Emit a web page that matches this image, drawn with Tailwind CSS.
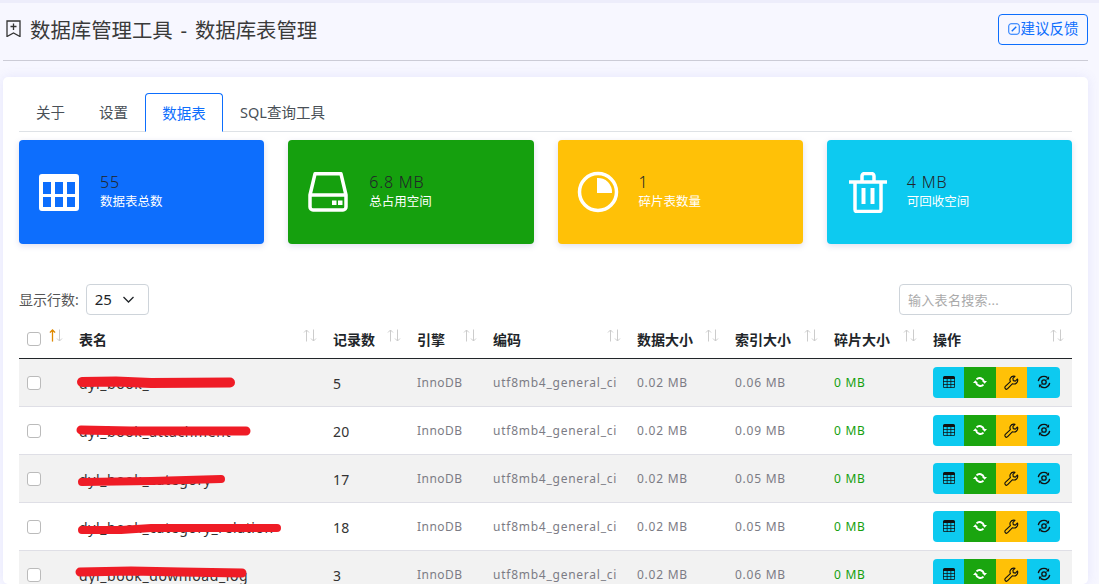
<!DOCTYPE html>
<html lang="zh-CN">
<head>
  <meta charset="UTF-8" />
  <meta name="viewport" content="width=device-width, initial-scale=1" />
  <title>数据库表管理</title>
  <script src="https://cdn.jsdelivr.net/npm/@tailwindcss/browser@4"></script>
</head>
<body class="bg-[#f7f7ff] h-[584px] overflow-hidden font-['Noto_Sans','Noto_Sans_CJK_SC',sans-serif] text-[#212529]">

  <!-- icons used by the table rows -->
  <svg class="hidden">
    <symbol id="i-table" viewBox="0 0 16 16"><path d="M0 2a2 2 0 0 1 2-2h12a2 2 0 0 1 2 2v12a2 2 0 0 1-2 2H2a2 2 0 0 1-2-2V2zm15 2h-4v3h4V4zm0 4h-4v3h4V8zm0 4h-4v3h3a1 1 0 0 0 1-1v-2zm-5 3v-3H6v3h4zm-5 0v-3H1v2a1 1 0 0 0 1 1h3zm-4-4h4V8H1v3zm0-4h4V4H1v3zm5-3v3h4V4H6zm4 4H6v3h4V8z"/></symbol>
    <symbol id="i-repeat" viewBox="0 0 16 16"><path d="M10.500 6.800h5.500l-2.750 3.200zM0 9.200h5.500L2.750 6z"/><path fill="none" stroke="currentColor" stroke-width="2.200" d="M4 5a5 5 0 0 1 8.500 2.500M12 11a5 5 0 0 1-8.500-2.500"/></symbol>
    <symbol id="i-wrench" viewBox="0 0 16 16"><path fill="none" stroke="currentColor" stroke-width="1.200" stroke-linejoin="round" d="M10.200 1.200a4 4 0 0 1 1.500.2L9.500 3.700l.4 2.300 2.200.5 2.300-2.200a4 4 0 0 1-5.300 5L3.900 14.600a1.700 1.700 0 0 1-2.500-2.400l5.400-5.200a4 4 0 0 1 3.400-5.800z"/></symbol>
    <symbol id="i-sync" viewBox="0 0 16 16"><g fill="none" stroke="currentColor" stroke-width="1.500"><circle cx="8" cy="8" r="2.500"/><path d="M1.500 7A6.500 6.500 0 0 1 12 3M14.500 9A6.500 6.500 0 0 1 4 13"/></g><path d="M13.800 1.500v3.700h-3.700zM2.200 14.500v-3.700h3.700z"/></symbol>
    <symbol id="i-sort" viewBox="0 0 14 13"><path fill="none" stroke="currentColor" stroke-width="1" d="M3.500 12.500V1M1 3.500 3.500 1 6 3.500M10.500.5V12M8 9.500l2.500 2.500L13 9.500"/></symbol>
  </svg>

  <div class="h-[3px] bg-[#ededfb]"></div>

  <div class="ml-[3px] w-[1085px]">
    <!-- page header -->
    <header class="h-[58px] border-b border-[#ccccd6] flex items-center justify-between">
      <div class="flex items-center gap-[9px] pl-[3px] pb-[3px]">
        <svg class="w-[15px] h-[17px] text-[#333] mb-[4px]" viewBox="0 0 15 17" fill="none" stroke="currentColor" stroke-width="1.300"><path d="M1 16.500V1h13v15.500l-6.500-3.500zM4.500 6.500h6M7.500 3.500v6.500"/></svg>
        <h1 class="text-[20.4px] leading-[30px] text-[#3a3a3a] [word-spacing:2.5px]">数据库管理工具 - 数据库表管理</h1>
      </div>
      <a class="h-[31px] w-[90px] border border-[#0d6efd] rounded-[4px] text-[#0d6efd] text-[14.5px] flex items-center justify-center gap-[1px] mb-[5px]">
        <svg class="w-[12px] h-[12px]" viewBox="0 0 16 16" fill="none" stroke="currentColor" stroke-width="1.300"><rect x="1" y="1" width="14" height="14" rx="3"/><path d="M5 11l6-6" stroke-width="2"/></svg>
        建议反馈
      </a>
    </header>

    <!-- main card -->
    <main class="mt-[16px] h-[507px] bg-white rounded-[5px] shadow-[0_0_12px_rgba(110,110,230,0.12)] px-[16px] pt-[16px] overflow-hidden">
      <nav class="flex h-[39px] border-b border-[#dee2e6] text-[14.5px] text-[#495057]">
        <a class="w-[63px] pt-[2px] flex items-center justify-center">关于</a>
        <a class="w-[63px] pt-[2px] flex items-center justify-center">设置</a>
        <a class="w-[78px] h-[39px] pt-[2px] flex items-center justify-center text-[#0d6efd] bg-white border border-[#0d6efd] border-b-white rounded-t-[4px]">数据表</a>
        <a class="px-[17px] pt-[2px] flex items-center">SQL查询工具</a>
      </nav>

      <!-- stats -->
      <section class="grid grid-cols-4 gap-[24px] mt-[8px] h-[104px]">
        <div class="bg-[#0d6efd] rounded-[4px] shadow-[0_2px_6px_rgba(80,80,160,0.18)] flex items-center pl-[20px]">
          <svg class="w-[40px] h-[37px] text-white shrink-0 mt-[1px]" viewBox="0 0 40 37" fill="currentColor"><path fill-rule="evenodd" d="M3 0h34a3 3 0 0 1 3 3v31a3 3 0 0 1-3 3H3a3 3 0 0 1-3-3V3a3 3 0 0 1 3-3zM4 8v12h8V8zm12 0v12h8V8zm12 0v12h8V8zM4 23v10h8V23zm12 0v10h8V23zm12 0v10h8V23z"/></svg>
          <div class="ml-[21px] pb-[4px]">
            <div class="text-[16px] leading-[24px] tracking-[0.8px] font-light">55</div>
            <div class="text-[12.5px] leading-[16px] text-white">数据表总数</div>
          </div>
        </div>
        <div class="bg-[#15a00e] rounded-[4px] shadow-[0_2px_6px_rgba(80,80,160,0.18)] flex items-center pl-[20px]">
          <svg class="w-[40px] h-[40px] text-white shrink-0" viewBox="0 0 40 40" fill="none" stroke="currentColor" stroke-width="3.500" stroke-linejoin="round"><path d="M7 1.800h26l5 21.200v12a3 3 0 0 1-3 3H5a3 3 0 0 1-3-3V23zM2 23h36"/><path fill="currentColor" stroke="none" d="M24 28.500h4.500v4.500H24zM30 28.500h4.500v4.500H30z"/></svg>
          <div class="ml-[21px] pb-[4px]">
            <div class="text-[16px] leading-[24px] tracking-[0.8px] font-light">6.8 MB</div>
            <div class="text-[12.5px] leading-[16px] text-white">总占用空间</div>
          </div>
        </div>
        <div class="bg-[#ffc107] rounded-[4px] shadow-[0_2px_6px_rgba(80,80,160,0.18)] flex items-center pl-[19px]">
          <svg class="w-[42px] h-[42px] text-white shrink-0" viewBox="0 0 42 42" fill="none"><circle cx="21" cy="21" r="18.500" stroke="currentColor" stroke-width="3.500"/><path fill="currentColor" d="M20 7a14 14 0 0 1 15 15H20z"/></svg>
          <div class="ml-[20px] pb-[4px]">
            <div class="text-[16px] leading-[24px] tracking-[0.8px] font-light">1</div>
            <div class="text-[12.5px] leading-[16px] text-white">碎片表数量</div>
          </div>
        </div>
        <div class="bg-[#0dcaf0] rounded-[4px] shadow-[0_2px_6px_rgba(80,80,160,0.18)] flex items-center pl-[22px]">
          <svg class="w-[38px] h-[41px] text-white shrink-0" viewBox="0 0 38 41" fill="none" stroke="currentColor" stroke-width="3.500"><path d="M0 10h38M13 10V4a2.500 2.500 0 0 1 2.500-2.500h7A2.500 2.500 0 0 1 25 4v6M6 10v27.500a2 2 0 0 0 2 2h22a2 2 0 0 0 2-2V10"/><path d="M14.500 16v16M23.500 16v16" stroke-width="4"/></svg>
          <div class="ml-[20px] pb-[4px]">
            <div class="text-[16px] leading-[24px] tracking-[0.8px] font-light">4 MB</div>
            <div class="text-[12.5px] leading-[16px] text-white">可回收空间</div>
          </div>
        </div>
      </section>

      <!-- table tools -->
      <div class="flex items-center justify-between mt-[40px] h-[31px]">
        <div class="flex items-center gap-[7px] text-[14px] text-[#555] pb-[1px]">
          显示行数:
          <div class="w-[63px] h-[31px] border border-[#ced4da] rounded-[4px] flex items-center justify-between pl-[8px] pr-[14px] text-[15px] text-[#212529]">
            25
            <svg class="w-[11px] h-[7px]" viewBox="0 0 11 7" fill="none" stroke="currentColor" stroke-width="1.300"><path d="M.5 1l5 5 5-5"/></svg>
          </div>
        </div>
        <input class="w-[173px] h-[31px] border border-[#ced4da] rounded-[4px] px-[8px] text-[13px] tracking-[0.3px] outline-none placeholder:text-[#aaa]" placeholder="输入表名搜索..." />
      </div>

      <!-- tables list -->
      <table class="table-fixed w-[1053px] mt-[6px] border-collapse">
        <colgroup>
          <col class="w-[52px]" /><col class="w-[254px]" /><col class="w-[84px]" /><col class="w-[76px]" />
          <col class="w-[144px]" /><col class="w-[98px]" /><col class="w-[99px]" /><col class="w-[99px]" /><col class="w-[147px]" />
        </colgroup>
        <thead class="text-[14px] text-left">
          <tr class="h-[37px] border-b border-[#212529]">
            <th class="relative pl-[8px]">
              <span class="block w-[14px] h-[14px] border border-[#bbb] rounded-[3px] bg-white"></span>
              <svg class="absolute right-[8px] top-[8px] w-[14px] h-[13px] text-[#ccc]" viewBox="0 0 14 13"><use href="#i-sort" /></svg>
              <svg class="absolute right-[15px] top-[8px] w-[7px] h-[13px] text-[#e08a00]" viewBox="0 0 7 13"><path fill="none" stroke="currentColor" stroke-width="1.300" d="M3.500 12.500V1M1 3.500 3.500 1 6 3.500"/></svg>
            </th>
            <th class="relative px-[8px] font-bold">表名<svg class="absolute right-[8px] top-[8px] w-[14px] h-[13px] text-[#ccc]"><use href="#i-sort" /></svg></th>
            <th class="relative px-[8px] font-bold">记录数<svg class="absolute right-[8px] top-[8px] w-[14px] h-[13px] text-[#ccc]"><use href="#i-sort" /></svg></th>
            <th class="relative px-[8px] font-bold">引擎<svg class="absolute right-[8px] top-[8px] w-[14px] h-[13px] text-[#ccc]"><use href="#i-sort" /></svg></th>
            <th class="relative px-[8px] font-bold">编码<svg class="absolute right-[8px] top-[8px] w-[14px] h-[13px] text-[#ccc]"><use href="#i-sort" /></svg></th>
            <th class="relative px-[8px] font-bold">数据大小<svg class="absolute right-[8px] top-[8px] w-[14px] h-[13px] text-[#ccc]"><use href="#i-sort" /></svg></th>
            <th class="relative px-[8px] font-bold">索引大小<svg class="absolute right-[8px] top-[8px] w-[14px] h-[13px] text-[#ccc]"><use href="#i-sort" /></svg></th>
            <th class="relative px-[8px] font-bold">碎片大小<svg class="absolute right-[8px] top-[8px] w-[14px] h-[13px] text-[#ccc]"><use href="#i-sort" /></svg></th>
            <th class="relative px-[8px] font-bold">操作<svg class="absolute right-[8px] top-[8px] w-[14px] h-[13px] text-[#ccc]"><use href="#i-sort" /></svg></th>
          </tr>
        </thead>
        <tbody class="text-[12px] text-[#7c7c85] tracking-[0.75px] [&_td:not(:last-child)]:pt-[2px]">
          <tr class="h-[48px] bg-[#f2f2f2] border-b border-[#dfdfe6]">
            <td class="pl-[8px]"><span class="block w-[14px] h-[14px] border border-[#bbb] rounded-[3px] bg-white"></span></td>
            <td class="relative px-[8px] text-[14px] text-[#333] tracking-[0.6px]">dyl_book_
              <svg class="absolute left-0 top-0 w-[254px] h-[48px]" viewBox="0 0 254 48" fill="none" stroke="#ef1c26" stroke-width="10" stroke-linecap="round"><path d="M11 23 45 22.500 80 24 159 23.500"/></svg>
            </td>
            <td class="px-[8px] text-[14px] text-[#333] tracking-[0.3px]">5</td>
            <td class="px-[8px] tracking-[0.45px]">InnoDB</td>
            <td class="px-[8px]">utf8mb4_general_ci</td>
            <td class="px-[8px]">0.02 MB</td>
            <td class="px-[8px]">0.06 MB</td>
            <td class="px-[8px] text-[#15a00e]">0 MB</td>
            <td class="px-[8px]">
              <div class="flex w-[127px] h-[31px] rounded-[4px] overflow-hidden text-[#111]">
                <span class="w-[31px] bg-[#0dcaf0] flex items-center justify-center"><svg class="w-[12px] h-[12px]" fill="currentColor"><use href="#i-table" /></svg></span>
                <span class="w-[32px] bg-[#1aa50f] flex items-center justify-center text-white"><svg class="w-[14px] h-[14px]" fill="currentColor"><use href="#i-repeat" /></svg></span>
                <span class="w-[31px] bg-[#ffc107] flex items-center justify-center"><svg class="w-[15px] h-[15px]" fill="currentColor"><use href="#i-wrench" /></svg></span>
                <span class="w-[33px] bg-[#0dcaf0] flex items-center justify-center"><svg class="w-[14px] h-[14px]" fill="currentColor"><use href="#i-sync" /></svg></span>
              </div>
            </td>
          </tr>
          <tr class="h-[48px] border-b border-[#dfdfe6]">
            <td class="pl-[8px]"><span class="block w-[14px] h-[14px] border border-[#bbb] rounded-[3px] bg-white"></span></td>
            <td class="relative px-[8px] text-[14px] text-[#333] tracking-[0.6px]">dyl_book_attachment
              <svg class="absolute left-0 top-0 w-[254px] h-[48px]" viewBox="0 0 254 48" fill="none" stroke="#ef1c26" stroke-width="9" stroke-linecap="round"><path d="M10 23 60 24 175 24"/></svg>
            </td>
            <td class="px-[8px] text-[14px] text-[#333] tracking-[0.3px]">20</td>
            <td class="px-[8px] tracking-[0.45px]">InnoDB</td>
            <td class="px-[8px]">utf8mb4_general_ci</td>
            <td class="px-[8px]">0.02 MB</td>
            <td class="px-[8px]">0.09 MB</td>
            <td class="px-[8px] text-[#15a00e]">0 MB</td>
            <td class="px-[8px]">
              <div class="flex w-[127px] h-[31px] rounded-[4px] overflow-hidden text-[#111]">
                <span class="w-[31px] bg-[#0dcaf0] flex items-center justify-center"><svg class="w-[12px] h-[12px]" fill="currentColor"><use href="#i-table" /></svg></span>
                <span class="w-[32px] bg-[#1aa50f] flex items-center justify-center text-white"><svg class="w-[14px] h-[14px]" fill="currentColor"><use href="#i-repeat" /></svg></span>
                <span class="w-[31px] bg-[#ffc107] flex items-center justify-center"><svg class="w-[15px] h-[15px]" fill="currentColor"><use href="#i-wrench" /></svg></span>
                <span class="w-[33px] bg-[#0dcaf0] flex items-center justify-center"><svg class="w-[14px] h-[14px]" fill="currentColor"><use href="#i-sync" /></svg></span>
              </div>
            </td>
          </tr>
          <tr class="h-[48px] bg-[#f2f2f2] border-b border-[#dfdfe6]">
            <td class="pl-[8px]"><span class="block w-[14px] h-[14px] border border-[#bbb] rounded-[3px] bg-white"></span></td>
            <td class="relative px-[8px] text-[14px] text-[#333] tracking-[0.6px]">dyl_book_category
              <svg class="absolute left-0 top-0 w-[254px] h-[48px]" viewBox="0 0 254 48" fill="none" stroke="#ef1c26" stroke-width="8" stroke-linecap="round"><path d="M11 27 80 26 115 25 150 24"/></svg>
            </td>
            <td class="px-[8px] text-[14px] text-[#333] tracking-[0.3px]">17</td>
            <td class="px-[8px] tracking-[0.45px]">InnoDB</td>
            <td class="px-[8px]">utf8mb4_general_ci</td>
            <td class="px-[8px]">0.02 MB</td>
            <td class="px-[8px]">0.05 MB</td>
            <td class="px-[8px] text-[#15a00e]">0 MB</td>
            <td class="px-[8px]">
              <div class="flex w-[127px] h-[31px] rounded-[4px] overflow-hidden text-[#111]">
                <span class="w-[31px] bg-[#0dcaf0] flex items-center justify-center"><svg class="w-[12px] h-[12px]" fill="currentColor"><use href="#i-table" /></svg></span>
                <span class="w-[32px] bg-[#1aa50f] flex items-center justify-center text-white"><svg class="w-[14px] h-[14px]" fill="currentColor"><use href="#i-repeat" /></svg></span>
                <span class="w-[31px] bg-[#ffc107] flex items-center justify-center"><svg class="w-[15px] h-[15px]" fill="currentColor"><use href="#i-wrench" /></svg></span>
                <span class="w-[33px] bg-[#0dcaf0] flex items-center justify-center"><svg class="w-[14px] h-[14px]" fill="currentColor"><use href="#i-sync" /></svg></span>
              </div>
            </td>
          </tr>
          <tr class="h-[48px] border-b border-[#dfdfe6]">
            <td class="pl-[8px]"><span class="block w-[14px] h-[14px] border border-[#bbb] rounded-[3px] bg-white"></span></td>
            <td class="relative px-[8px] text-[14px] text-[#333] tracking-[0.6px]">dyl_book_category_relation
              <svg class="absolute left-0 top-0 w-[254px] h-[48px]" viewBox="0 0 254 48" fill="none" stroke="#ef1c26" stroke-width="8" stroke-linecap="round"><path d="M11 27 50 27 80 25 206 25"/></svg>
            </td>
            <td class="px-[8px] text-[14px] text-[#333] tracking-[0.3px]">18</td>
            <td class="px-[8px] tracking-[0.45px]">InnoDB</td>
            <td class="px-[8px]">utf8mb4_general_ci</td>
            <td class="px-[8px]">0.02 MB</td>
            <td class="px-[8px]">0.05 MB</td>
            <td class="px-[8px] text-[#15a00e]">0 MB</td>
            <td class="px-[8px]">
              <div class="flex w-[127px] h-[31px] rounded-[4px] overflow-hidden text-[#111]">
                <span class="w-[31px] bg-[#0dcaf0] flex items-center justify-center"><svg class="w-[12px] h-[12px]" fill="currentColor"><use href="#i-table" /></svg></span>
                <span class="w-[32px] bg-[#1aa50f] flex items-center justify-center text-white"><svg class="w-[14px] h-[14px]" fill="currentColor"><use href="#i-repeat" /></svg></span>
                <span class="w-[31px] bg-[#ffc107] flex items-center justify-center"><svg class="w-[15px] h-[15px]" fill="currentColor"><use href="#i-wrench" /></svg></span>
                <span class="w-[33px] bg-[#0dcaf0] flex items-center justify-center"><svg class="w-[14px] h-[14px]" fill="currentColor"><use href="#i-sync" /></svg></span>
              </div>
            </td>
          </tr>
          <tr class="h-[48px] bg-[#f2f2f2]">
            <td class="pl-[8px]"><span class="block w-[14px] h-[14px] border border-[#bbb] rounded-[3px] bg-white"></span></td>
            <td class="relative px-[8px] text-[14px] text-[#333] tracking-[0.6px]">dyl_book_download_log
              <svg class="absolute left-0 top-0 w-[254px] h-[48px]" viewBox="0 0 254 48" fill="none" stroke="#ef1c26" stroke-width="9" stroke-linecap="round"><path d="M9 21 60 20 110 21 171 22"/></svg>
            </td>
            <td class="px-[8px] text-[14px] text-[#333] tracking-[0.3px]">3</td>
            <td class="px-[8px] tracking-[0.45px]">InnoDB</td>
            <td class="px-[8px]">utf8mb4_general_ci</td>
            <td class="px-[8px]">0.02 MB</td>
            <td class="px-[8px]">0.06 MB</td>
            <td class="px-[8px] text-[#15a00e]">0 MB</td>
            <td class="px-[8px]">
              <div class="flex w-[127px] h-[31px] rounded-[4px] overflow-hidden text-[#111]">
                <span class="w-[31px] bg-[#0dcaf0] flex items-center justify-center"><svg class="w-[12px] h-[12px]" fill="currentColor"><use href="#i-table" /></svg></span>
                <span class="w-[32px] bg-[#1aa50f] flex items-center justify-center text-white"><svg class="w-[14px] h-[14px]" fill="currentColor"><use href="#i-repeat" /></svg></span>
                <span class="w-[31px] bg-[#ffc107] flex items-center justify-center"><svg class="w-[15px] h-[15px]" fill="currentColor"><use href="#i-wrench" /></svg></span>
                <span class="w-[33px] bg-[#0dcaf0] flex items-center justify-center"><svg class="w-[14px] h-[14px]" fill="currentColor"><use href="#i-sync" /></svg></span>
              </div>
            </td>
          </tr>
        </tbody>
      </table>
    </main>
  </div>

</body>
</html>
